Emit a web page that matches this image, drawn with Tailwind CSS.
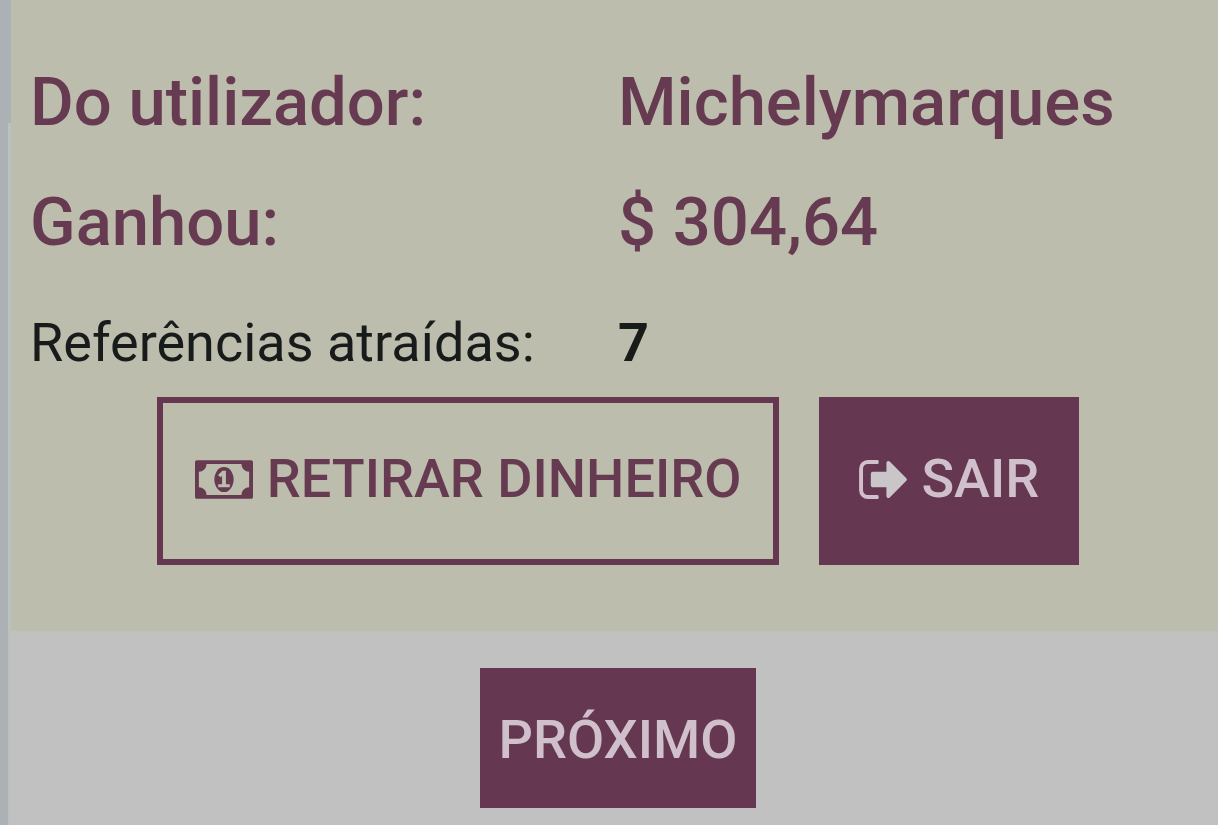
<!DOCTYPE html>
<html lang="pt">
<head>
    <meta charset="UTF-8">
    <meta name="viewport" content="width=device-width, initial-scale=1.0">
    <title>Conta</title>
    <script src="https://cdn.jsdelivr.net/npm/@tailwindcss/browser@4"></script>
</head>
<body class="flex min-h-screen bg-[#c1c1c1] font-['Roboto',sans-serif] text-[54px] leading-[82px] text-[#171b19]">
    <!-- page edge -->
    <div class="flex w-[11px] shrink-0 flex-col bg-[#abb1b4]">
        <div class="h-[123px]"></div>
        <div class="ml-2 grow bg-[#bbc1bd]"></div>
    </div>

    <main class="min-w-0 grow">
        <section class="bg-[#bcbdad] pt-[42px] pr-3 pb-[66px] pl-[19px]">
            <dl class="grid grid-cols-2 text-[67px] leading-[120px] font-medium text-[#663a50]">
                <dt>Do utilizador:</dt>
                <dd>Michelymarques</dd>
                <dt>Ganhou:</dt>
                <dd>$ 304,64</dd>
            </dl>
            <dl class="grid grid-cols-2 pt-5">
                <dt>Referências atraídas:</dt>
                <dd class="font-bold">7</dd>
            </dl>
            <div class="mt-[13px] flex justify-center gap-10">
                <button type="button" class="flex h-[168px] items-center gap-[14px] border-6 border-[#653750] px-8 pb-1 font-medium whitespace-nowrap text-[#663a50]">
                    <svg class="h-[39px] w-[58px] shrink-0" viewBox="0 256 1920 1280" fill="currentColor" aria-hidden="true">
                        <path d="M768 1152h384v-96h-128v-448h-114l-148 137 77 80q42-37 55-57h2v288h-128v96zm512-256q0 70-21 142t-59.5 134-101.5 101-138 39-138-39-101.5-101-59.5-134-21-142 21-142 59.5-134 101.5-101 138-39 138 39 101.5 101 59.5 134 21 142zm512 256v-512q-106 0-181-75t-75-181h-1152q0 106-75 181t-181 75v512q106 0 181 75t75 181h1152q0-106 75-181t181-75zm128-832v1152q0 26-19 45t-45 19h-1792q-26 0-45-19t-19-45v-1152q0-26 19-45t45-19h1792q26 0 45 19t19 45z"/>
                    </svg>
                    RETIRAR DINHEIRO
                </button>
                <button type="button" class="flex h-[168px] items-center gap-[14px] bg-[#653750] px-10 pb-1 font-medium whitespace-nowrap text-[#d0c0cb]">
                    <svg class="h-[39px] w-[48px] shrink-0" viewBox="64 256 1568 1280" fill="currentColor" aria-hidden="true">
                        <path d="M704 1440q0 4 1 20t.5 26.500-3 23.500-10 19.500-20.500 6.500h-320q-119 0-203.500-84.500t-84.500-203.500v-704q0-119 84.500-203.500t203.500-84.500h320q13 0 22.500 9.500t9.500 22.500q0 4 1 20t.5 26.500-3 23.500-10 19.500-20.500 6.500h-320q-66 0-113 47t-47 113v704q0 66 47 113t113 47h312l11.500 1 11.500 3 8 5.500 7 9 2 13.500z"/>
                        <path fill="#c9c5c9" d="M1632 896q0 26-19 45l-544 544q-19 19-45 19t-45-19-19-45v-288h-448q-26 0-45-19t-19-45v-384q0-26 19-45t45-19h448v-288q0-26 19-45t45-19 45 19l544 544q19 19 19 45z"/>
                    </svg>
                    SAIR
                </button>
            </div>
        </section>

        <div class="flex justify-center pt-[37px] pr-3 pb-4 pl-[19px]">
            <button type="button" class="h-[140px] bg-[#653750] px-[19px] pt-1 font-medium text-[#d0c0cb]">PRÓXIMO</button>
        </div>
    </main>
</body>
</html>
